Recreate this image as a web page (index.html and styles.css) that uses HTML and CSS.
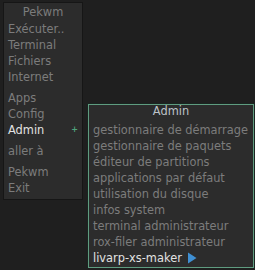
FILE: index.html
```html
<!DOCTYPE html>
<html lang="fr">
<head>
    <meta charset="UTF-8">
    <title>Pekwm menu</title>
    <link rel="stylesheet" href="styles.css">
</head>
<body>
    <div class="desktop">
        <div class="menu main-menu">
            <div class="menu-title">Pekwm</div>
            <div class="menu-item">Exécuter..</div>
            <div class="menu-item">Terminal</div>
            <div class="menu-item">Fichiers</div>
            <div class="menu-item">Internet</div>
            <div class="separator"></div>
            <div class="menu-item">Apps</div>
            <div class="menu-item">Config</div>
            <div class="menu-item active">Admin <span class="sub-mark">+</span></div>
            <div class="separator"></div>
            <div class="menu-item">aller à</div>
            <div class="separator"></div>
            <div class="menu-item">Pekwm</div>
            <div class="menu-item">Exit</div>
        </div>

        <div class="menu sub-menu">
            <div class="menu-title">Admin</div>
            <div class="menu-item">gestionnaire de démarrage</div>
            <div class="menu-item">gestionnaire de paquets</div>
            <div class="menu-item">éditeur de partitions</div>
            <div class="menu-item">applications par défaut</div>
            <div class="menu-item">utilisation du disque</div>
            <div class="menu-item">infos system</div>
            <div class="menu-item">terminal administrateur</div>
            <div class="menu-item">rox-filer administrateur</div>
            <div class="menu-item active">livarp-xs-maker
                <svg class="cursor" width="10" height="12" viewBox="0 0 10 12" aria-hidden="true">
                    <path d="M1 0.5 L9.5 6 L1 11.5 Z" fill="#3f8fd2"/>
                </svg>
            </div>
        </div>
    </div>
</body>
</html>
```

FILE: styles.css
```css
body {
    margin: 0;
    background: #1f1f1f;
    font-family: "DejaVu Sans", sans-serif;
    font-size: 11.4px;
}

.desktop {
    display: flex;
    align-items: flex-start;
    gap: 5px;
    padding: 2px 0 0 3px;
}

.menu {
    background: #2c2c2c;
    box-sizing: border-box;
}

.main-menu {
    width: 80px;
    border: 1px solid #161616;
    padding: 0 4px 3px;
}

.sub-menu {
    width: 166px;
    margin-top: 102px;
    border: 1px solid #5f9c80;
    box-shadow: 0 0 0 1px #1a2420;
    padding: 0 4px 1px;
}

.menu-title {
    text-align: center;
    color: #7c7c7c;
}

.main-menu .menu-title {
    line-height: 18px;
}

.sub-menu .menu-title {
    line-height: 13px;
    color: #bcc2c8;
    margin-bottom: 4px;
}

.menu-item {
    line-height: 16px;
    height: 16px;
    color: #7c7c7c;
    white-space: nowrap;
    display: flex;
    align-items: center;
}

.menu-item.active {
    color: #e2e2e2;
}

.sub-mark {
    margin-left: auto;
    color: #4fa37c;
    font-size: 8px;
    font-weight: bold;
}

.separator {
    height: 5px;
}

.cursor {
    margin-left: 5px;
}
```
